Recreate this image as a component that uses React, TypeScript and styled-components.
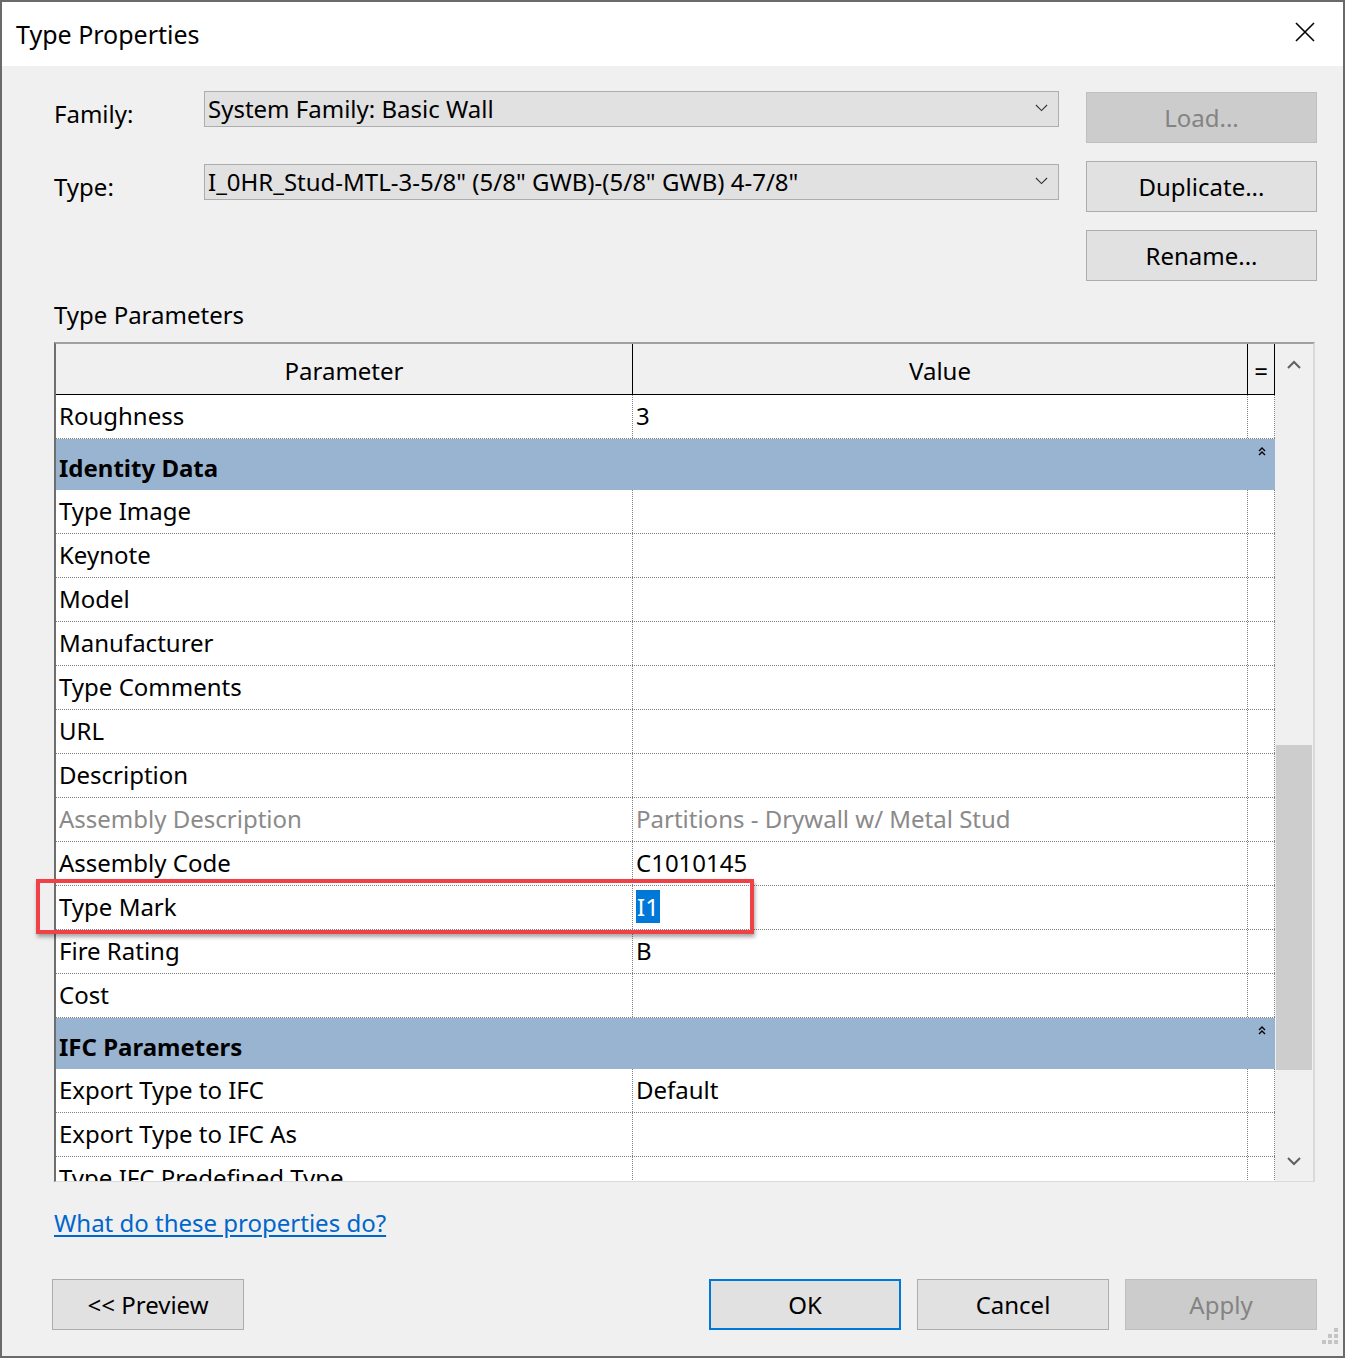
import React from 'react'
import styled, { createGlobalStyle, css } from 'styled-components'

const FONT = `'Noto Sans', 'Open Sans', 'Liberation Sans', sans-serif`

const GlobalStyle = createGlobalStyle`
  html, body {
    margin: 0;
    padding: 0;
    background: #f0f0f0;
  }
  * {
    box-sizing: border-box;
  }
`

const Dialog = styled.div`
  position: relative;
  width: 1345px;
  height: 1358px;
  border: 2px solid #6a6a6a;
  background: #f0f0f0;
  font-family: ${FONT};
  font-size: 24px;
  color: #000;
  display: flex;
  flex-direction: column;
  overflow: hidden;
`

const TitleBar = styled.div`
  height: 64px;
  background: #fff;
  display: flex;
  align-items: center;
  justify-content: space-between;
  padding: 0 26px 0 14px;
  font-size: 25px;
`

const CloseButton = styled.div`
  width: 24px;
  height: 24px;
  display: flex;
  align-items: center;
  justify-content: center;
  margin-top: -4px;
`

const Body = styled.div`
  flex: 1;
  display: flex;
  flex-direction: column;
  padding: 25px 26px 0 50px;
`

const TopSection = styled.div`
  display: flex;
  gap: 27px;
`

const Fields = styled.div`
  flex: 1;
  display: flex;
  flex-direction: column;
  gap: 37px;
  padding-left: 2px;
`

const FieldRow = styled.div`
  display: flex;
  align-items: center;
  height: 36px;
`

const FieldLabel = styled.div`
  width: 150px;
  padding-top: 8px;
`

const Combo = styled.div`
  flex: 1;
  height: 36px;
  background: #e1e1e1;
  border: 1px solid #adadad;
  display: flex;
  align-items: center;
  justify-content: space-between;
  padding: 0 10px 1px 3px;
  white-space: nowrap;
`

const SideButtons = styled.div`
  width: 231px;
  display: flex;
  flex-direction: column;
  gap: 18px;
  padding-top: 1px;
`

const Button = styled.div<{ $disabled?: boolean; $default?: boolean; $width?: number }>`
  height: 51px;
  width: ${({ $width }) => ($width ? `${$width}px` : 'auto')};
  background: #e1e1e1;
  border: 1px solid #adadad;
  display: flex;
  align-items: center;
  justify-content: center;
  padding-bottom: 1px;
  ${({ $disabled }) =>
    $disabled &&
    css`
      background: #cccccc;
      border-color: #bfbfbf;
      color: #838383;
    `}
  ${({ $default }) =>
    $default &&
    css`
      border: 2px solid #0078d7;
    `}
`

const SectionLabel = styled.div`
  margin: 17px 0 0 2px;
  height: 44px;
`

const Grid = styled.div`
  margin-left: 2px;
  width: 1261px;
  height: 840px;
  display: flex;
  border-top: 2px solid #a0a0a0;
  border-left: 2px solid #6e6e6e;
  border-bottom: 1px solid #dadada;
  border-right: 2px solid #dadada;
  background: #fff;
`

const GridMain = styled.div`
  flex: 1;
  display: flex;
  flex-direction: column;
  overflow: hidden;
`

const COLS = '577px 615px 27px'

const HeaderRow = styled.div`
  display: grid;
  grid-template-columns: ${COLS};
  height: 51px;
  flex-shrink: 0;
  background: #f0f0f0;
  border-bottom: 1px solid #000;
`

const HeaderCell = styled.div`
  border-right: 1px solid #000;
  display: flex;
  align-items: center;
  justify-content: center;
  padding-top: 2px;
`

const Row = styled.div<{ $muted?: boolean }>`
  display: grid;
  grid-template-columns: ${COLS};
  height: 44px;
  flex-shrink: 0;
  border-bottom: 1px dotted #808080;
  color: ${({ $muted }) => ($muted ? '#8a8a8a' : '#000')};
`

const Cell = styled.div`
  border-right: 1px dotted #808080;
  display: flex;
  align-items: center;
  padding: 0 0 2px 3px;
  white-space: nowrap;
  overflow: hidden;
`

const GroupRow = styled.div`
  display: grid;
  grid-template-columns: 1192px 27px;
  height: 51px;
  flex-shrink: 0;
  background: #99b4d1;
  font-weight: 700;
`

const GroupTitle = styled.div`
  display: flex;
  align-items: center;
  padding: 5px 0 0 3px;
`

const GroupToggle = styled.div`
  display: flex;
  justify-content: center;
  padding-top: 8px;
`

const Selected = styled.span`
  background: #0078d7;
  color: #fff;
  padding: 0 1px;
`

const ScrollBar = styled.div`
  width: 38px;
  background: #f0f0f0;
  display: flex;
  flex-direction: column;
  align-items: center;
`

const ScrollArrow = styled.div`
  height: 40px;
  width: 100%;
  display: flex;
  align-items: center;
  justify-content: center;
`

const ScrollTrack = styled.div`
  flex: 1;
  width: 100%;
  padding: 361px 1px 71px 1px;
  display: flex;
`

const ScrollThumb = styled.div`
  flex: 1;
  background: #cdcdcd;
`

const HelpLink = styled.a`
  margin: 24px 0 0 2px;
  color: #0066cc;
  text-decoration: underline;
  text-underline-offset: 3px;
  align-self: flex-start;
`

const Footer = styled.div`
  margin-top: 40px;
  display: flex;
  gap: 16px;
`

const Spacer = styled.div`
  flex: 1;
`

const Highlight = styled.div`
  position: absolute;
  left: 34px;
  top: 877px;
  width: 718px;
  height: 55px;
  border: 4px solid #ef4146;
  box-shadow: 1px 3px 4px rgba(0, 0, 0, 0.35);
  pointer-events: none;
`

const Grip = styled.div`
  position: absolute;
  right: 3px;
  bottom: 3px;
`

const Chevron = ({ dir, color = '#606060', size = 14, width = 2 }: { dir: 'up' | 'down'; color?: string; size?: number; width?: number }) => (
  <svg width={size} height={size / 2 + 2} viewBox='0 0 14 9'>
    <path
      d={dir === 'up' ? 'M1 8 L7 2 L13 8' : 'M1 1 L7 7 L13 1'}
      fill='none'
      stroke={color}
      strokeWidth={width}
    />
  </svg>
)

const CollapseIcon = () => (
  <svg width='8' height='10' viewBox='0 0 8 10'>
    <path d='M1 4 L4 1 L7 4 M1 8 L4 5 L7 8' fill='none' stroke='#000' strokeWidth='1.4' />
  </svg>
)

type Param = { name: string; value?: React.ReactNode; muted?: boolean }
type Section = { title?: string; params: Param[] }

const SECTIONS: Section[] = [
  { params: [{ name: 'Roughness', value: '3' }] },
  {
    title: 'Identity Data',
    params: [
      { name: 'Type Image' },
      { name: 'Keynote' },
      { name: 'Model' },
      { name: 'Manufacturer' },
      { name: 'Type Comments' },
      { name: 'URL' },
      { name: 'Description' },
      { name: 'Assembly Description', value: 'Partitions - Drywall w/ Metal Stud', muted: true },
      { name: 'Assembly Code', value: 'C1010145' },
      { name: 'Type Mark', value: <Selected>I1</Selected> },
      { name: 'Fire Rating', value: 'B' },
      { name: 'Cost' },
    ],
  },
  {
    title: 'IFC Parameters',
    params: [
      { name: 'Export Type to IFC', value: 'Default' },
      { name: 'Export Type to IFC As' },
      { name: 'Type IFC Predefined Type' },
    ],
  },
]

export default function App() {
  return (
    <>
      <GlobalStyle />
      <Dialog>
        <TitleBar>
          <span>Type Properties</span>
          <CloseButton>
            <svg width='20' height='20' viewBox='0 0 20 20'>
              <path d='M1 1 L19 19 M19 1 L1 19' stroke='#000' strokeWidth='1.6' />
            </svg>
          </CloseButton>
        </TitleBar>
        <Body>
          <TopSection>
            <Fields>
              <FieldRow>
                <FieldLabel>Family:</FieldLabel>
                <Combo>
                  <span>System Family: Basic Wall</span>
                  <Chevron dir='down' color='#333' size={13} width={1.2} />
                </Combo>
              </FieldRow>
              <FieldRow>
                <FieldLabel>Type:</FieldLabel>
                <Combo>
                  <span>I_0HR_Stud-MTL-3-5/8" (5/8" GWB)-(5/8" GWB) 4-7/8"</span>
                  <Chevron dir='down' color='#333' size={13} width={1.2} />
                </Combo>
              </FieldRow>
            </Fields>
            <SideButtons>
              <Button $disabled>Load...</Button>
              <Button>Duplicate...</Button>
              <Button>Rename...</Button>
            </SideButtons>
          </TopSection>

          <SectionLabel>Type Parameters</SectionLabel>

          <Grid>
            <GridMain>
              <HeaderRow>
                <HeaderCell>Parameter</HeaderCell>
                <HeaderCell>Value</HeaderCell>
                <HeaderCell>=</HeaderCell>
              </HeaderRow>
              {SECTIONS.map((section, i) => (
                <React.Fragment key={section.title ?? i}>
                  {section.title && (
                    <GroupRow>
                      <GroupTitle>{section.title}</GroupTitle>
                      <GroupToggle>
                        <CollapseIcon />
                      </GroupToggle>
                    </GroupRow>
                  )}
                  {section.params.map((p) => (
                    <Row key={p.name} $muted={p.muted}>
                      <Cell>{p.name}</Cell>
                      <Cell>{p.value}</Cell>
                      <Cell />
                    </Row>
                  ))}
                </React.Fragment>
              ))}
            </GridMain>
            <ScrollBar>
              <ScrollArrow>
                <Chevron dir='up' />
              </ScrollArrow>
              <ScrollTrack>
                <ScrollThumb />
              </ScrollTrack>
              <ScrollArrow>
                <Chevron dir='down' />
              </ScrollArrow>
            </ScrollBar>
          </Grid>

          <HelpLink href='#'>What do these properties do?</HelpLink>

          <Footer>
            <Button $width={192}>&lt;&lt; Preview</Button>
            <Spacer />
            <Button $width={192} $default>
              OK
            </Button>
            <Button $width={192}>Cancel</Button>
            <Button $width={192} $disabled>
              Apply
            </Button>
          </Footer>
        </Body>
        <Highlight />
        <Grip>
          <svg width='18' height='18' viewBox='0 0 18 18'>
            {[
              [12, 0],
              [12, 6],
              [6, 6],
              [12, 12],
              [6, 12],
              [0, 12],
            ].map(([x, y]) => (
              <rect key={`${x}-${y}`} x={x} y={y} width='4' height='4' fill='#c4c4c4' />
            ))}
          </svg>
        </Grip>
      </Dialog>
    </>
  )
}
